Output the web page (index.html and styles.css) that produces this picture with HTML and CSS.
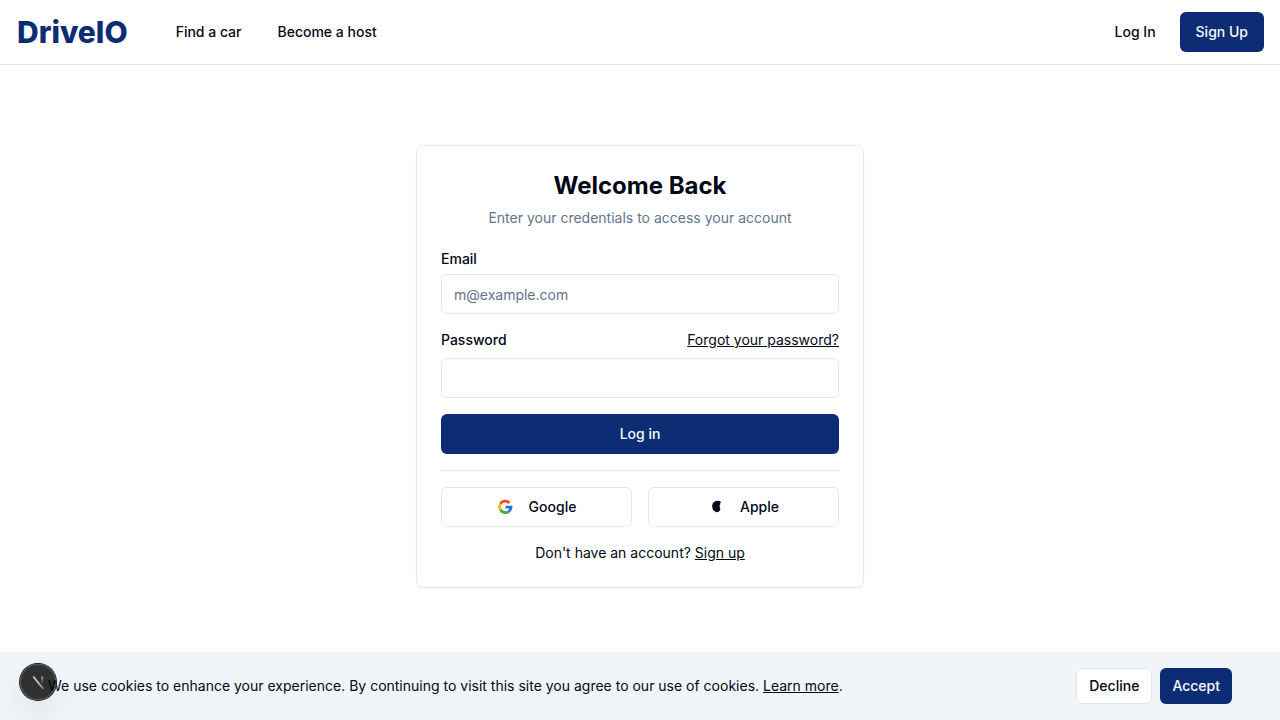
FILE: index.html
```html
<!DOCTYPE html>
<html lang="en">
<head>
<meta charset="utf-8">
<meta name="viewport" content="width=device-width, initial-scale=1">
<title>DriveIO</title>
<link rel="stylesheet" href="styles.css">
</head>
<body>
<header class="header">
  <a class="logo" href="#">DriveIO</a>
  <nav class="nav">
    <a href="#">Find a car</a>
    <a href="#">Become a host</a>
  </nav>
  <div class="account">
    <button class="btn btn-ghost" type="button">Log In</button>
    <button class="btn btn-primary" type="button">Sign Up</button>
  </div>
</header>
<main class="main">
  <section class="card">
    <div class="card-head">
      <h1 class="title">Welcome Back</h1>
      <p class="subtitle">Enter your credentials to access your account</p>
    </div>
    <form class="form">
      <div class="field">
        <label class="label" for="email">Email</label>
        <input class="input" id="email" type="email" placeholder="m@example.com">
      </div>
      <div class="field">
        <div class="label-row">
          <label class="label" for="password">Password</label>
          <a class="link" href="#">Forgot your password?</a>
        </div>
        <input class="input" id="password" type="password">
      </div>
      <button class="btn btn-primary" type="submit">Log in</button>
      <div class="divider"></div>
      <div class="providers">
        <button class="btn btn-outline" type="button">
          <svg class="icon" viewBox="0 0 16 16" aria-hidden="true">
            <g fill="none" stroke-width="2.8">
              <path stroke="#ff4614" d="M3.3 4.9A5.7 5.7 0 0 1 12.300 4"/>
              <path stroke="#fbb90c" d="M3.400 10.800A5.700 5.700 0 0 1 3.400 4.900"/>
              <path stroke="#4aa83d" d="M11.900 12.300A5.700 5.700 0 0 1 3.400 10.800"/>
              <path stroke="#1b72d2" d="M8.500 8.200h5.500A5.600 5.600 0 0 1 11.900 12.300"/>
            </g>
          </svg>
          Google
        </button>
        <button class="btn btn-outline" type="button">
          <svg class="icon" viewBox="0 0 16 16" aria-hidden="true">
            <path fill="#020817" d="M12.900 2.900C12 1.900 10.700 1.600 9.600 2 8.900 1.600 7.800 1.900 7 2.500 5.300 2.900 4.200 4.900 4.200 7.100c0 2.500 1 4.700 2.700 5.200.6.900 1.700 1.200 2.500.8 1.100 0 2-.7 2.600-2.100l.4-1.500c-.8-.5-1-1.200-.4-1.900-.8-.8-.6-1.600.3-2.100-.3-.9 0-1.800.6-2.600z"/>
          </svg>
          Apple
        </button>
      </div>
      <p class="signup">Don't have an account? <a class="link" href="#">Sign up</a></p>
    </form>
  </section>
</main>
<aside class="cookies">
  <p class="cookies-text">We use cookies to enhance your experience. By continuing to visit this site you agree to our use of cookies. <a class="link" href="#">Learn more</a>.</p>
  <div class="cookies-actions">
    <button class="btn btn-small btn-outline" type="button">Decline</button>
    <button class="btn btn-small btn-primary" type="button">Accept</button>
  </div>
</aside>
<button class="devtools" type="button" aria-label="Open developer tools">
  <svg class="devtools-mark" viewBox="0 0 36 36" aria-hidden="true">
    <defs>
      <linearGradient id="slash" gradientUnits="userSpaceOnUse" x1="13" y1="12" x2="23" y2="25">
        <stop offset="0.5" stop-color="#fff" stop-opacity="0.75"/>
        <stop offset="1" stop-color="#fff" stop-opacity="0.4"/>
      </linearGradient>
      <linearGradient id="stem" gradientUnits="userSpaceOnUse" x1="22" y1="12" x2="22" y2="20">
        <stop offset="0" stop-color="#fff" stop-opacity="0.7"/>
        <stop offset="1" stop-color="#fff" stop-opacity="0"/>
      </linearGradient>
    </defs>
    <path d="M13.200 12.500L23.200 24.800" fill="none" stroke="url(#slash)" stroke-width="1.700"/>
    <rect x="21.400" y="12.500" width="1.600" height="8" fill="url(#stem)"/>
  </svg>
</button>
</body>
</html>
```

FILE: styles.css
```css
* {
  box-sizing: border-box;
}

body {
  margin: 0;
  background: #fff;
  color: #020817;
  font-family: Inter, "Liberation Sans", sans-serif;
  font-size: 14px;
  line-height: 20px;
}

h1,
p {
  margin: 0;
}

a {
  color: inherit;
}

.header {
  display: flex;
  align-items: center;
  min-height: 65px;
  padding: 12px 16px;
  border-bottom: 1px solid #e2e8f0;
}

.logo {
  padding-left: 1px;
  color: #0c2d74;
  font-size: 30px;
  font-weight: 800;
  line-height: 36px;
  text-decoration: none;
}

.nav {
  display: flex;
  gap: 36px;
  margin-left: 48px;
  font-weight: 500;
}

.nav a {
  text-decoration: none;
}

.account {
  display: flex;
  gap: 8px;
  margin-left: auto;
}

.btn {
  display: inline-flex;
  align-items: center;
  justify-content: center;
  gap: 16px;
  height: 40px;
  padding: 0 16px;
  border: 0;
  border-radius: 6px;
  font: inherit;
  font-weight: 500;
  color: inherit;
  white-space: nowrap;
  cursor: pointer;
}

.btn-primary {
  background: #0c2d74;
  color: #f8fafc;
}

.btn-ghost {
  background: transparent;
}

.btn-outline {
  border: 1px solid #e2e8f0;
  background: #fff;
}

.btn-small {
  height: 36px;
  padding: 0 12px;
}

.icon {
  width: 16px;
  height: 16px;
}

.main {
  display: flex;
  justify-content: center;
  padding: 80px 16px;
}

.card {
  width: 100%;
  max-width: 448px;
  padding: 24px;
  border: 1px solid #e2e8f0;
  border-radius: 8px;
  box-shadow: 0 1px 2px rgba(0, 0, 0, 0.05);
}

.card-head {
  display: grid;
  gap: 6px;
  margin-bottom: 24px;
  text-align: center;
}

.title {
  font-size: 24px;
  font-weight: 700;
  line-height: 32px;
}

.subtitle {
  color: #64748b;
}

.form {
  display: grid;
  gap: 16px;
}

.field {
  display: grid;
  gap: 8px;
}

.label {
  font-weight: 500;
  line-height: 14px;
}

.label-row {
  display: flex;
  align-items: center;
  justify-content: space-between;
}

.link {
  text-decoration: underline;
}

.input {
  width: 100%;
  height: 40px;
  padding: 8px 12px;
  border: 1px solid #e2e8f0;
  border-radius: 6px;
  background: #fff;
  color: inherit;
  font: inherit;
}

.input::placeholder {
  color: #64748b;
}

.divider {
  height: 1px;
  background: #e2e8f0;
}

.providers {
  display: grid;
  grid-template-columns: 1fr 1fr;
  gap: 16px;
}

.signup {
  text-align: center;
}

.cookies {
  position: fixed;
  right: 0;
  bottom: 0;
  left: 0;
  display: flex;
  align-items: center;
  justify-content: space-between;
  gap: 16px;
  padding: 16px 48px;
  background: #f1f5f9;
}

.cookies-actions {
  display: flex;
  gap: 8px;
}

.devtools {
  position: fixed;
  bottom: 20px;
  left: 20px;
  width: 36px;
  height: 36px;
  padding: 0;
  border: 0;
  border-radius: 50%;
  background: rgba(0, 0, 0, 0.8);
  box-shadow: 0 0 0 1px #171717, inset 0 0 0 1px rgba(255, 255, 255, 0.14), 0 16px 32px -8px rgba(0, 0, 0, 0.24);
}

.devtools-mark {
  display: block;
  width: 36px;
  height: 36px;
}
```
